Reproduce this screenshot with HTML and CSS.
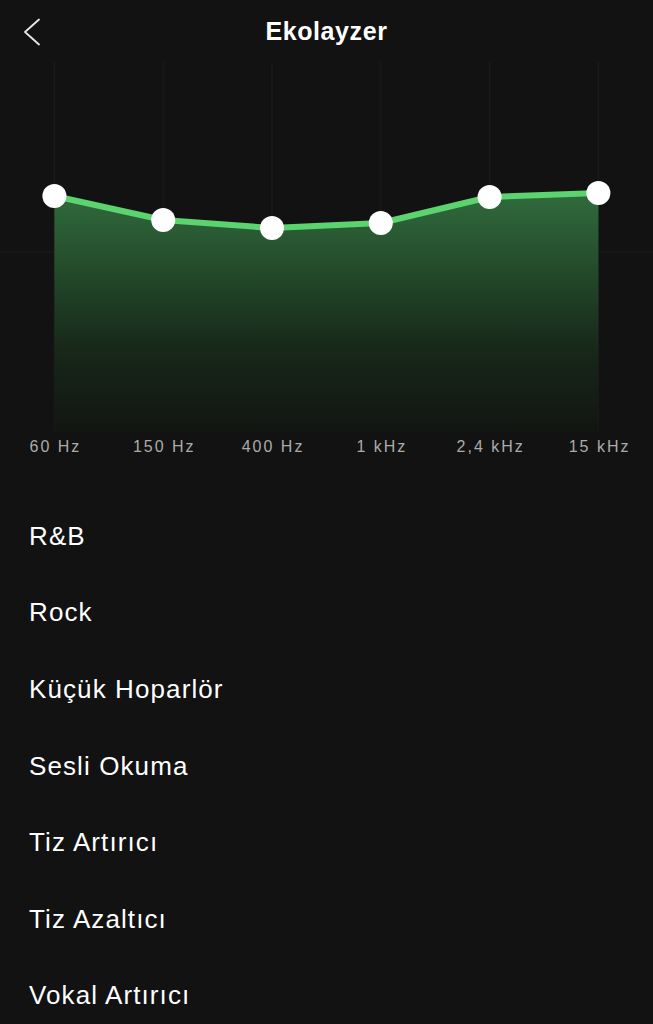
FILE: index.html
```html
<!DOCTYPE html>
<html lang="tr">
<head>
<meta charset="utf-8">
<title>Ekolayzer</title>
<link rel="stylesheet" href="styles.css">
</head>
<body>
<div class="screen">
  <header class="topbar">
    <button class="back" aria-label="Geri">
      <svg width="20" height="28" viewBox="0 0 20 28"><path d="M18 1.5 L4 14 L18 26.5" fill="none" stroke="#e8e8e8" stroke-width="1.8" stroke-linecap="round" stroke-linejoin="round"/></svg>
    </button>
    <h1 class="title">Ekolayzer</h1>
  </header>

  <section class="chart">
    <svg class="eq" width="653" height="370" viewBox="0 0 653 370">
      <defs>
        <linearGradient id="fillg" x1="0" y1="0" x2="0" y2="1" gradientUnits="objectBoundingBox">
          <stop offset="0" stop-color="#316b3c"/>
          <stop offset="0.3" stop-color="#244d2c"/>
          <stop offset="0.65" stop-color="#172819"/>
          <stop offset="1" stop-color="#121512"/>
        </linearGradient>
      </defs>
      <g stroke="#1a1a1a" stroke-width="1.5">
        <line x1="54.4" y1="0" x2="54.4" y2="370"/>
        <line x1="163.2" y1="0" x2="163.2" y2="370"/>
        <line x1="272" y1="0" x2="272" y2="370"/>
        <line x1="380.8" y1="0" x2="380.8" y2="370"/>
        <line x1="489.6" y1="0" x2="489.6" y2="370"/>
        <line x1="598.4" y1="0" x2="598.4" y2="370"/>
        <line x1="0" y1="190" x2="653" y2="190"/>
      </g>
      <path d="M54.4 134 L163.2 158 L272 166 L380.8 161 L489.6 135 L598.4 131 L598.4 370 L54.4 370 Z" fill="url(#fillg)"/>
      <polyline points="54.4,134 163.2,158 272,166 380.8,161 489.6,135 598.4,131" fill="none" stroke="#5bd46f" stroke-width="6" stroke-linejoin="round"/>
      <g fill="#ffffff">
        <circle cx="54.4" cy="134" r="12"/>
        <circle cx="163.2" cy="158" r="12"/>
        <circle cx="272" cy="166" r="12"/>
        <circle cx="380.8" cy="161" r="12"/>
        <circle cx="489.6" cy="135" r="12"/>
        <circle cx="598.4" cy="131" r="12"/>
      </g>
    </svg>
    <div class="bands">
      <span>60 Hz</span>
      <span>150 Hz</span>
      <span>400 Hz</span>
      <span>1 kHz</span>
      <span>2,4 kHz</span>
      <span>15 kHz</span>
    </div>
  </section>

  <ul class="presets">
    <li>R&amp;B</li>
    <li>Rock</li>
    <li>Küçük Hoparlör</li>
    <li>Sesli Okuma</li>
    <li>Tiz Artırıcı</li>
    <li>Tiz Azaltıcı</li>
    <li>Vokal Artırıcı</li>
  </ul>
</div>
</body>
</html>
```
FILE: styles.css
```css
* { box-sizing: border-box; }
html, body {
  margin: 0;
  padding: 0;
  background: #121212;
}
body {
  font-family: "Liberation Sans", Arial, sans-serif;
  color: #ffffff;
  width: 653px;
  height: 1024px;
  overflow: hidden;
}
.screen {
  display: flex;
  flex-direction: column;
}
.topbar {
  height: 62px;
  display: flex;
  align-items: center;
  justify-content: center;
  position: relative;
}
.back {
  position: absolute;
  left: 21px;
  top: 18px;
  background: none;
  border: 0;
  padding: 0;
  display: flex;
}
.title {
  margin: 0;
  font-size: 25px;
  font-weight: 700;
  letter-spacing: 0.6px;
  padding-bottom: 0;
}
.chart {
  display: flex;
  flex-direction: column;
}
.eq { display: block; }
.bands {
  display: grid;
  grid-template-columns: repeat(6, 1fr);
  height: 30px;
  align-items: center;
}
.bands span {
  text-align: center;
  font-size: 16px;
  letter-spacing: 2px;
  padding-left: 2px;
  color: #ababab;
}
.presets {
  list-style: none;
  margin: 0;
  padding: 36px 0 0 29px;
}
.presets li {
  height: 76.6px;
  display: flex;
  align-items: center;
  font-size: 26px;
  letter-spacing: 1.1px;
}
```
